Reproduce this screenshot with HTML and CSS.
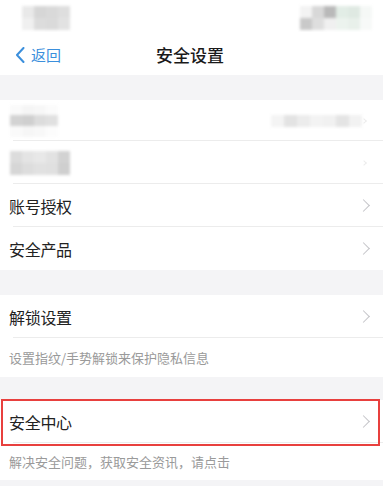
FILE: index.html
```html
<!DOCTYPE html>
<html lang="zh">
<head>
<meta charset="utf-8">
<link rel="stylesheet" href="styles.css">
</head>
<body>
<div class="phone">
  <div class="status">
    <div class="mosaic m-left">
      <i style="background:#e9e9e9"></i><i style="background:#d6d6d6"></i><i style="background:#d9d9d9"></i><i style="background:#dedede"></i>
      <i style="background:#f0f0f0"></i><i style="background:#dcdcdc"></i><i style="background:#dadada"></i><i style="background:#e2e2e2"></i>
    </div>
    <div class="mosaic m-right">
      <i style="background:#f3f3f3"></i><i style="background:#d8d8d8"></i><i style="background:#b9b9b9"></i><i style="background:#e2ede6"></i><i style="background:#dfe9e2"></i><i style="background:#f5f8f6"></i>
      <i style="background:#c9c9c9"></i><i style="background:#dedede"></i><i style="background:#f0f0f0"></i><i style="background:#ecf3ee"></i><i style="background:#e8f0ea"></i><i style="background:#f7f9f8"></i>
    </div>
  </div>
  <div class="nav">
    <div class="back">
      <svg width="10" height="16" viewBox="0 0 10 16"><path d="M8.5 1 L2 8 L8.5 15" fill="none" stroke="#3b8fdc" stroke-width="2" stroke-linecap="round" stroke-linejoin="round"/></svg>
      <span>返回</span>
    </div>
    <div class="title">安全设置</div>
  </div>

  <div class="group">
    <div class="row row1">
      <div class="mosaic m-r1">
        <i style="background:#fafafa"></i><i style="background:#f5f5f5"></i><i style="background:#f7f7f7"></i><i style="background:#fbfbfb"></i>
        <i style="background:#d3d3d3"></i><i style="background:#cfcfcf"></i><i style="background:#dcdcdc"></i><i style="background:#e0e0e0"></i>
        <i style="background:#fafafa"></i><i style="background:#f6f6f6"></i><i style="background:#f8f8f8"></i><i style="background:#fcfcfc"></i>
      </div>
      <div class="mosaic m-r1r">
        <i style="background:#f4f4f4"></i><i style="background:#e3e3e3"></i><i style="background:#ececec"></i><i style="background:#f3f3f3"></i><i style="background:#f1f1f1"></i><i style="background:#e4e4e4"></i><i style="background:#f2f2f2"></i>
      </div>
      <span class="chev faint"></span>
    </div>
    <div class="row row2">
      <div class="mosaic m-r2">
        <i style="background:#dcdcdc"></i><i style="background:#e4e4e4"></i><i style="background:#e8e8e8"></i><i style="background:#e2e2e2"></i><i style="background:#d2d2d2"></i>
        <i style="background:#d6d6d6"></i><i style="background:#dddddd"></i><i style="background:#e1e1e1"></i><i style="background:#e0e0e0"></i><i style="background:#cfcfcf"></i>
      </div>
      <span class="chev faint"></span>
    </div>
    <div class="row">
      <span class="label">账号授权</span>
      <span class="chev"></span>
    </div>
    <div class="row last">
      <span class="label">安全产品</span>
      <span class="chev"></span>
    </div>
  </div>

  <div class="group">
    <div class="row">
      <span class="label">解锁设置</span>
      <span class="chev"></span>
    </div>
    <div class="note">设置指纹/手势解锁来保护隐私信息</div>
  </div>

  <div class="group g3">
    <div class="row highlight">
      <span class="label">安全中心</span>
      <span class="chev"></span>
    </div>
    <div class="note n2">解决安全问题，获取安全资讯，请点击</div>
  </div>
</div>
</body>
</html>
```

FILE: styles.css
```css
* { box-sizing: border-box; margin: 0; padding: 0; }
html, body { width: 383px; height: 486px; overflow: hidden; }
body {
  background: #f4f4f6;
  font-family: "Noto Sans CJK SC", "Noto Sans", sans-serif;
  color: #222;
}
.phone { display: flex; flex-direction: column; }

.status {
  height: 32px;
  background: #fff;
  display: flex;
  justify-content: space-between;
  align-items: flex-start;
  padding: 6px 11px 0 22px;
}
.mosaic { display: grid; filter: blur(1.5px); }
.mosaic i { display: block; }
.m-left { grid-template-columns: repeat(4, 12px); grid-template-rows: repeat(2, 12px); }
.m-right { grid-template-columns: repeat(6, 12px); grid-template-rows: repeat(2, 12px); }

.nav {
  height: 43px;
  background: #fff;
  display: flex;
  align-items: center;
  justify-content: center;
  position: relative;
}
.back {
  position: absolute;
  left: 15px;
  top: 12px;
  display: flex;
  align-items: center;
  gap: 6px;
  color: #3b8fdc;
  font-size: 15px;
}
.back svg { display: block; }
.title {
  font-size: 17px;
  font-weight: 500;
  color: #1a1a1a;
  margin-right: 3px;
  margin-top: 2px;
}

.group { background: #fff; margin-top: 25px; }
.g3 { margin-top: 23px; }

.row {
  height: 43px;
  display: flex;
  align-items: center;
  justify-content: space-between;
  padding: 0 11px 0 9px;
  position: relative;
}
.row::after {
  content: "";
  position: absolute;
  left: 13px;
  right: 0;
  bottom: 0;
  height: 1px;
  background: #ececec;
}
.row.last::after { display: none; }
.row1 { height: 41px; }
.row2 { height: 43px; }
.label { font-size: 16px; color: #222; letter-spacing: -0.3px; }

.chev {
  width: 9px;
  height: 9px;
  border-top: 1.3px solid #c4c4c8;
  border-right: 1.3px solid #c4c4c8;
  transform: rotate(45deg);
  margin-right: 4px;
}
.chev.faint { border-color: #ececec; width: 4px; height: 4px; margin-right: 6px; }

.m-r1 { grid-template-columns: repeat(4, 12px); grid-template-rows: 10px 11px 11px; margin-left: 1px; }
.m-r1r {
  grid-template-columns: repeat(7, 13px);
  grid-template-rows: 12px;
  margin-left: auto;
  margin-right: 0;
}
.m-r2 { grid-template-columns: repeat(5, 12px); grid-template-rows: repeat(2, 12px); margin-left: 1px; }

.note {
  font-size: 13px;
  color: #9a9a9a;
  padding: 0 9px;
  height: 39px;
  display: flex;
  align-items: center;
}
.n2 { height: 37px; }

.highlight::before {
  content: "";
  position: absolute;
  left: 1px;
  right: 3px;
  top: -1px;
  bottom: -3px;
  border: 2px solid #e8403e;
  z-index: 2;
}
```
